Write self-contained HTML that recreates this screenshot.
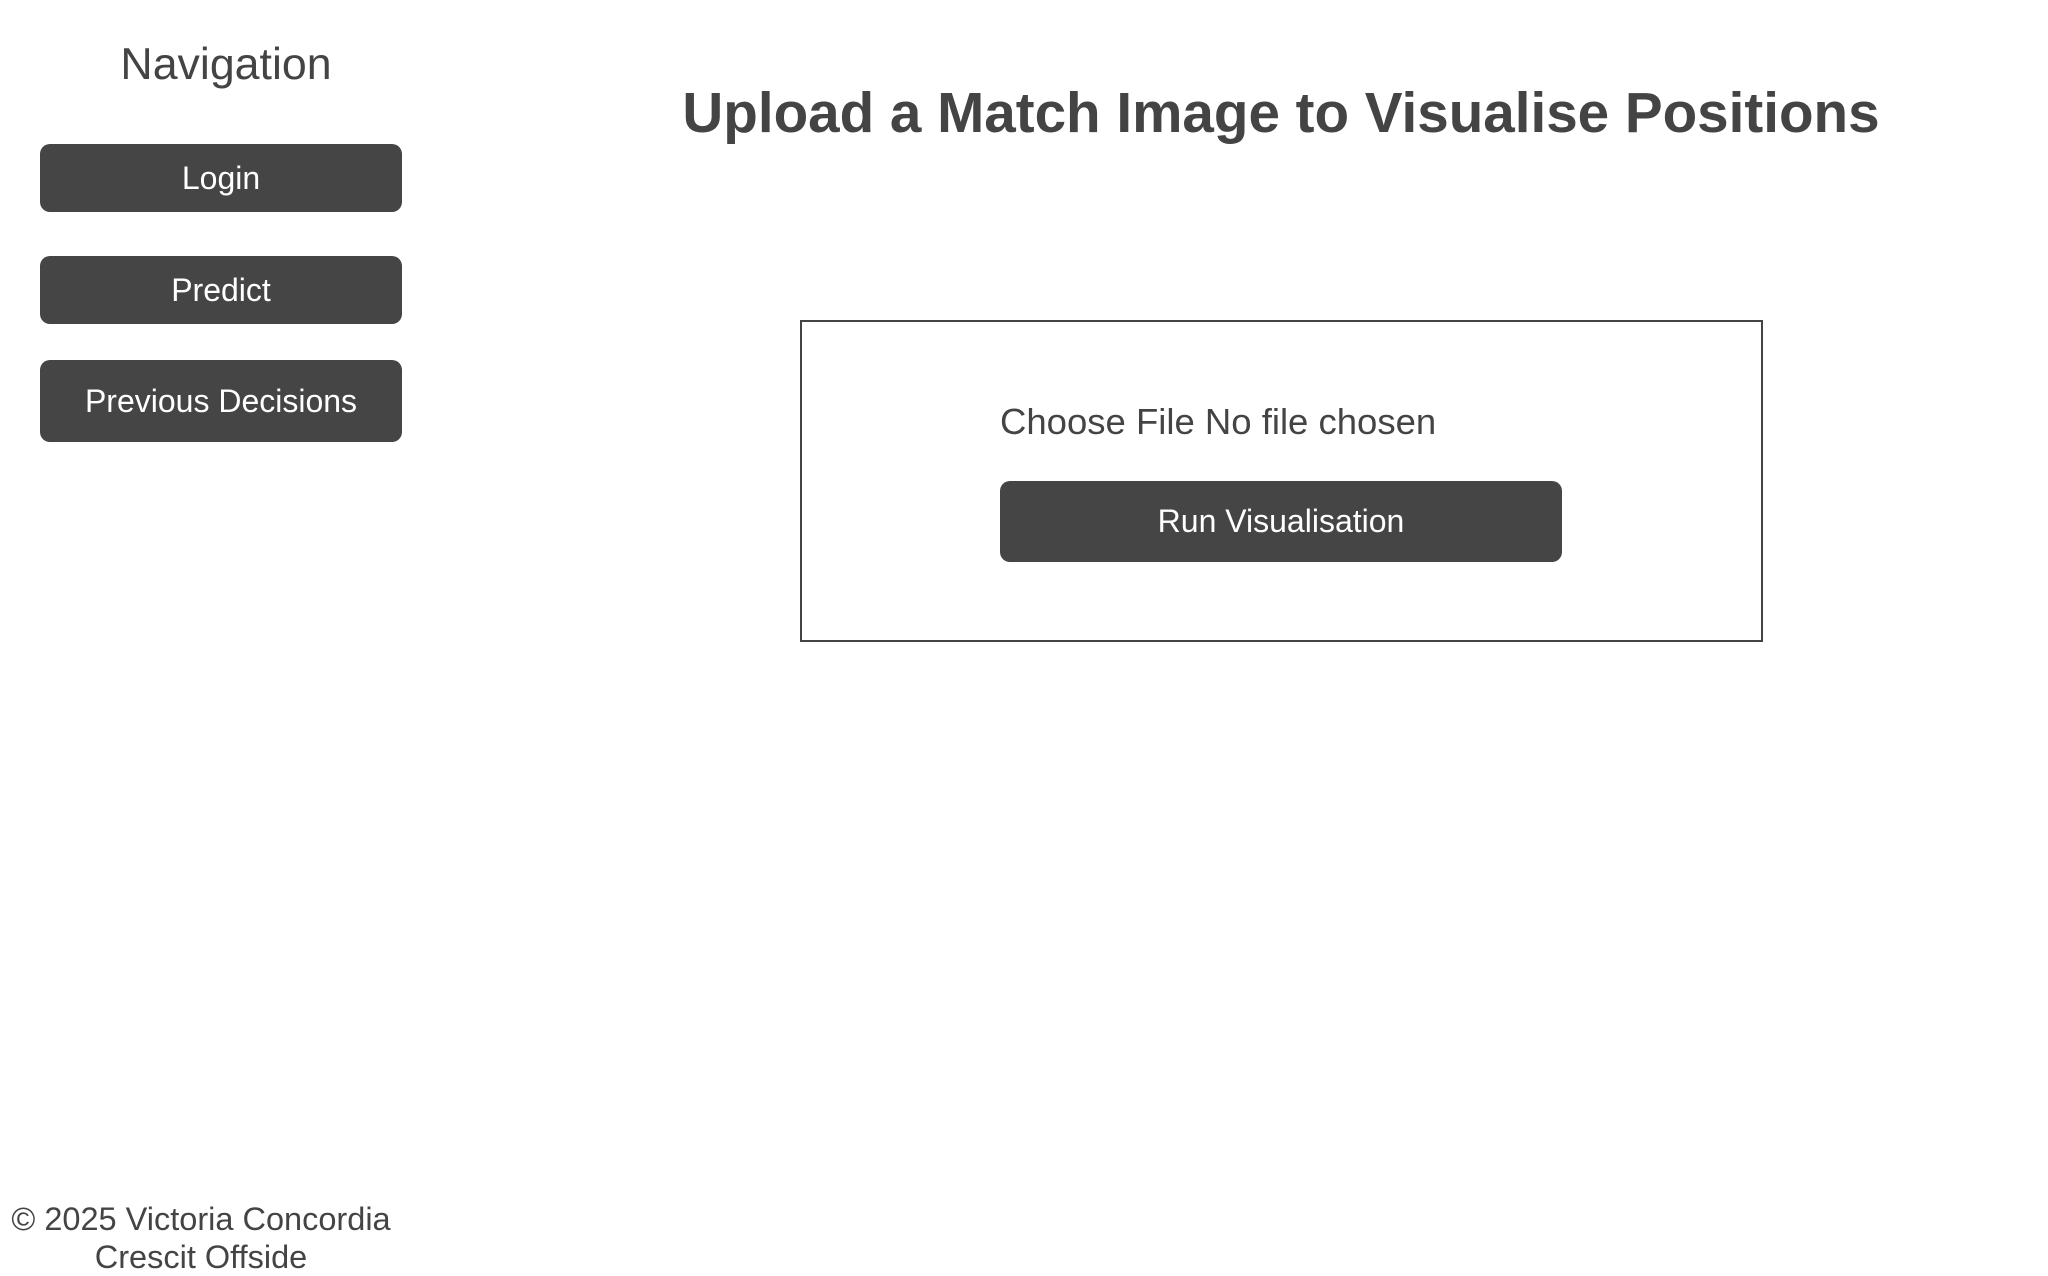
<!DOCTYPE html>
<html><head><meta charset="utf-8"><style>
*{margin:0;padding:0;box-sizing:border-box}
body{width:2048px;height:1276px;background:#fff;font-family:"Liberation Sans",sans-serif;color:#444;position:relative;overflow:hidden}
.a{position:absolute;white-space:nowrap}
.nav{left:0;width:452px;text-align:center;top:37px;font-size:44.7px;line-height:56px}
.btn{position:absolute;left:40px;width:362px;background:#454545;color:#fff;border-radius:10px;font-size:32px;display:flex;align-items:center;justify-content:center}
h1{position:absolute;left:0;width:2562px;text-align:center;top:81px;font-size:56.6px;line-height:64px;font-weight:bold}
.box{position:absolute;left:800px;top:320px;width:963px;height:322px;border:2px solid #444}
.file{left:1000px;top:401px;font-size:36.5px;line-height:42px}
.run{position:absolute;left:1000px;top:481px;width:562px;height:81px;background:#454545;color:#fff;border-radius:10px;font-size:32px;display:flex;align-items:center;justify-content:center}
.foot{left:0;width:402px;text-align:center;top:1200px;font-size:32.5px;line-height:38px}
</style></head><body>
<div class="a nav">Navigation</div>
<div class="btn" style="top:144px;height:68px">Login</div>
<div class="btn" style="top:256px;height:68px">Predict</div>
<div class="btn" style="top:360px;height:82px">Previous Decisions</div>
<h1>Upload a Match Image to Visualise Positions</h1>
<div class="box"></div>
<div class="a file">Choose File No file chosen</div>
<div class="run">Run Visualisation</div>
<div class="a foot">© 2025 Victoria Concordia<br>Crescit Offside</div>
</body></html>
